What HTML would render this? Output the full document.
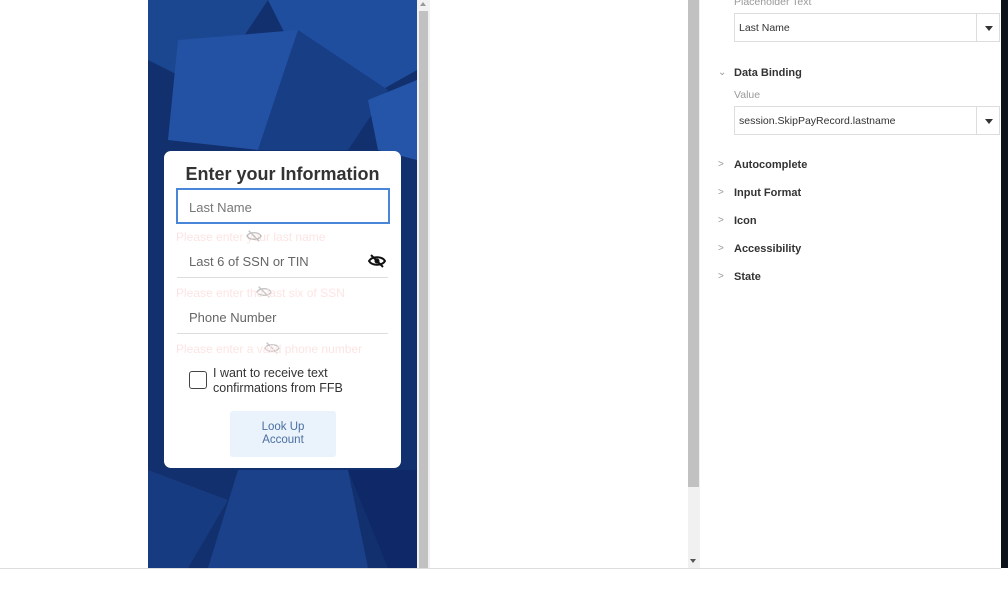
<!DOCTYPE html>
<html><head><style>
body{margin:0;width:1008px;height:592px;position:relative;overflow:hidden;background:#fff;font-family:"Liberation Sans",Arial,sans-serif}
.abs{position:absolute}
.err{position:absolute;left:176px;font-size:12px;color:#fde4e4}
.inp{position:absolute;left:177px;width:211px;height:34px;border-bottom:1px solid #ddd;font-size:13px;color:#666;box-sizing:border-box;padding:10px 12px}
.sec{position:absolute;left:734px;font-size:11px;font-weight:bold;color:#333}
.car{position:absolute;left:718px;font-size:10px;color:#999}
.sel{position:absolute;left:734px;width:266px;height:29px;border:1px solid #ddd;box-sizing:border-box;font-size:10.5px;color:#333;padding:8px 4px;background:#fff}
.sel:after{content:"";position:absolute;right:0;top:0;width:22px;height:27px;border-left:1px solid #ddd}
.sel i{position:absolute;right:6px;top:12px;border:4px solid transparent;border-top:5px solid #333;z-index:1}
</style></head><body>
<svg class="abs" style="left:148px;top:0" width="269" height="568" viewBox="0 0 269 568">
<rect width="269" height="568" fill="#12306e"/>
<polygon points="0,0 120,0 60,90 0,60" fill="#1b4690"/>
<polygon points="120,0 269,0 269,70 180,120" fill="#1f4e9e"/>
<polygon points="30,40 150,30 110,150 20,140" fill="#2352a5"/>
<polygon points="150,30 240,90 200,150 110,150" fill="#183f86"/>
<polygon points="220,100 269,80 269,160 230,150" fill="#2455a8"/>
<polygon points="0,470 80,500 40,568 0,568" fill="#173b80"/>
<polygon points="90,470 200,470 220,568 60,568" fill="#1a4189"/>
<polygon points="200,470 269,470 269,568 240,568" fill="#0f2868"/>
</svg>
<div class="abs" style="left:417px;top:0;width:13px;height:568px;background:#f1f1f1"></div>
<div class="abs" style="left:419px;top:11px;width:9px;height:557px;background:#c1c1c1"></div>
<div class="abs" style="left:420px;top:2px;border:3px solid transparent;border-bottom:4px solid #999;border-top:0"></div>
<div class="abs" style="left:164px;top:151px;width:237px;height:317px;background:#fff;border-radius:7px"></div>
<div class="abs" style="left:164px;top:164px;width:237px;text-align:center;font-size:18px;font-weight:bold;color:#333">Enter your Information</div>
<div class="abs" style="left:176px;top:188px;width:214px;height:36px;border:2px solid #4a86d8;box-sizing:border-box;font-size:13px;color:#777;padding:10px 11px">Last Name</div>
<div class="err" style="top:230px">Please enter your last name</div>
<div class="inp" style="top:244px">Last 6 of SSN or TIN</div>
<svg class="abs" style="left:368px;top:254px" width="18" height="14" viewBox="0 0 18 14"><path d="M1 7C4 2 14 2 17 7C14 12 4 12 1 7Z" fill="none" stroke="#111" stroke-width="2"/><circle cx="9" cy="7" r="2.5" fill="#111"/><path d="M3 1L15 13" stroke="#111" stroke-width="2"/></svg>
<svg class="abs" style="left:246px;top:229px" width="16" height="14" viewBox="0 0 18 14" opacity=".35"><path d="M1 7C4 2 14 2 17 7C14 12 4 12 1 7Z" fill="none" stroke="#555" stroke-width="1.5"/><path d="M3 1L15 13" stroke="#555" stroke-width="1.5"/></svg>
<svg class="abs" style="left:256px;top:285px" width="16" height="14" viewBox="0 0 18 14" opacity=".35"><path d="M1 7C4 2 14 2 17 7C14 12 4 12 1 7Z" fill="none" stroke="#555" stroke-width="1.5"/><path d="M3 1L15 13" stroke="#555" stroke-width="1.5"/></svg>
<svg class="abs" style="left:264px;top:341px" width="16" height="14" viewBox="0 0 18 14" opacity=".35"><path d="M1 7C4 2 14 2 17 7C14 12 4 12 1 7Z" fill="none" stroke="#555" stroke-width="1.5"/><path d="M3 1L15 13" stroke="#555" stroke-width="1.5"/></svg>
<div class="err" style="top:286px">Please enter the last six of SSN</div>
<div class="inp" style="top:300px">Phone Number</div>
<div class="err" style="top:342px">Please enter a valid phone number</div>
<div class="abs" style="left:189px;top:371px;width:16px;height:16px;border:1.5px solid #444;border-radius:3px"></div>
<div class="abs" style="left:213px;top:366px;font-size:12.5px;color:#333;line-height:15px">I want to receive text<br>confirmations from FFB</div>
<div class="abs" style="left:230px;top:411px;width:106px;height:46px;background:#eaf2fb;border-radius:3px;font-size:11.5px;color:#4a6fa0;text-align:center;line-height:13px;padding-top:10px;box-sizing:border-box">Look Up<br>Account</div>
<div class="abs" style="left:688px;top:0;width:12px;height:568px;background:#f1f1f1"></div>
<div class="abs" style="left:688px;top:0;width:11px;height:487px;background:#c1c1c1"></div>
<div class="abs" style="left:690px;top:559px;border:3px solid transparent;border-top:4px solid #555;border-bottom:0"></div>
<div class="abs" style="left:734px;top:-4px;font-size:10.5px;color:#999">Placeholder Text</div>
<div class="sel" style="top:13px">Last Name<i></i></div>
<div class="car" style="top:67px">&#8964;</div>
<div class="sec" style="top:67px">Data Binding</div>
<div class="abs" style="left:734px;top:89px;font-size:10.5px;color:#999">Value</div>
<div class="sel" style="top:106px">session.SkipPayRecord.lastname<i></i></div>
<div class="car" style="top:159px">&gt;</div><div class="sec" style="top:159px">Autocomplete</div>
<div class="car" style="top:187px">&gt;</div><div class="sec" style="top:187px">Input Format</div>
<div class="car" style="top:215px">&gt;</div><div class="sec" style="top:215px">Icon</div>
<div class="car" style="top:243px">&gt;</div><div class="sec" style="top:243px">Accessibility</div>
<div class="car" style="top:271px">&gt;</div><div class="sec" style="top:271px">State</div>
<div class="abs" style="left:1001px;top:0;width:7px;height:568px;background:#0d1218"></div>
<div class="abs" style="left:0;top:568px;width:1001px;height:1px;background:#ddd"></div>
</body></html>
